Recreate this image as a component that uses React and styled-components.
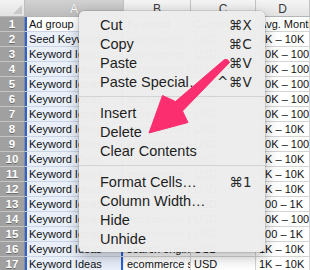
import React from "react";
import styled, { createGlobalStyle } from "styled-components";

const Global = createGlobalStyle`
  html, body { margin: 0; padding: 0; background: #fff; }
  #root { width: 310px; height: 270px; overflow: hidden; }
`;

const Stage = styled.div`
  position: relative;
  width: 310px;
  height: 270px;
  overflow: hidden;
  font-family: "Liberation Sans", Arial, sans-serif;
`;

const Sheet = styled.div`
  display: grid;
  grid-template-columns: 25px 99px 67px 65px 1fr;
  grid-template-rows: 17px repeat(17, 15px);
`;

const Corner = styled.div`
  position: relative;
  box-sizing: border-box;
  background: linear-gradient(#f3f3f3, #e2e2e2);
  border-right: 1px solid #bdbdbd;
  border-bottom: 1px solid #b5b5b5;
  &::after {
    content: "";
    position: absolute;
    right: 2px;
    bottom: 2px;
    border-style: solid;
    border-width: 0 0 9px 9px;
    border-color: transparent transparent #c9c9c9 transparent;
  }
`;

const ColHead = styled.div`
  box-sizing: border-box;
  display: flex;
  align-items: center;
  justify-content: center;
  font-size: 12px;
  color: ${(p) => (p.$active ? "#fdfdfd" : "#3a3a3a")};
  background: ${(p) =>
    p.$active ? "linear-gradient(#d2d2d2, #bcbcbc)" : "linear-gradient(#f4f4f4, #e3e3e3)"};
  text-shadow: ${(p) => (p.$active ? "0 0 1px #8a8a8a" : "none")};
  border-right: 1px solid #c2c2c2;
  border-bottom: 1px solid #b5b5b5;
  padding-top: 1px;
`;

const RowHead = styled.div`
  box-sizing: border-box;
  display: flex;
  align-items: center;
  justify-content: center;
  font-size: 11.5px;
  font-weight: bold;
  color: #fff;
  background: #a0a0a0;
  text-shadow: 0 1px 0 rgba(0, 0, 0, 0.35);
  border-bottom: 1px solid #c4c4c4;
  border-right: 1px solid #8a8a8a;
`;

const Cell = styled.div`
  box-sizing: border-box;
  display: flex;
  align-items: center;
  padding-left: ${(p) => (p.$sel ? "4px" : "3px")};
  font-size: 11px;
  color: #111;
  white-space: nowrap;
  overflow: hidden;
  background: ${(p) => (p.$sel ? (p.$activeCell ? "#ffffff" : "#e9f0fb") : "#ffffff")};
  border-right: 1px solid ${(p) => (p.$sel ? "transparent" : "#d4d4d4")};
  border-bottom: 1px solid ${(p) => (p.$sel ? "#cbd5e6" : "#d4d4d4")};
  box-shadow: ${(p) => (p.$sel ? "inset 2px 0 #2d62d8, inset -2px 0 #2d62d8" : "none")};
`;

const Menu = styled.div`
  position: absolute;
  left: 79px;
  top: 11px;
  width: 186px;
  box-sizing: border-box;
  padding: 4px 0 4px;
  background: rgba(237, 237, 237, 0.98);
  border-radius: 5px;
  box-shadow: 0 0 0 0.5px rgba(0, 0, 0, 0.18), 0 5px 14px rgba(0, 0, 0, 0.28);
  font-family: "Liberation Sans", "DejaVu Sans", Arial, sans-serif;
`;

const Item = styled.div`
  display: flex;
  align-items: center;
  justify-content: space-between;
  height: 19px;
  padding: 0 13px 0 21px;
  font-size: 14.5px;
  color: #1e1e1e;
`;

const Shortcut = styled.span`
  font-family: "DejaVu Sans", sans-serif;
  font-size: 13.5px;
  color: #2a2a2a;
  letter-spacing: 0.3px;
`;

const Separator = styled.div`
  height: 1px;
  background: #d3d3d3;
  margin: 5px 0 6px;
`;

const Arrow = styled.svg`
  position: absolute;
  left: 0;
  top: 0;
  width: 310px;
  height: 270px;
  pointer-events: none;
`;

const colA = [
  "Ad group",
  "Seed Keywords",
  ...Array(15).fill("Keyword Ideas"),
];
const colB = [
  "Keyword",
  "ecommerce",
  "ecommerce software",
  "ecommerce platform",
  "ecommerce website",
  "ecommerce sites",
  "ecommerce solutions",
  "ecommerce hosting",
  "ecommerce store",
  "ecommerce shop",
  "ecommerce web",
  "ecommerce builder",
  "ecommerce design",
  "ecommerce tools",
  "ecommerce business",
  "search engine optimization",
  "ecommerce software",
];
const colC = ["Currency", ...Array(16).fill("USD")];
const colD = [
  "Avg. Monthly Searches",
  "1K – 10K",
  "10K – 100K",
  "10K – 100K",
  "10K – 100K",
  "10K – 100K",
  "10K – 100K",
  "1K – 10K",
  "10K – 100K",
  "1K – 10K",
  "1K – 10K",
  "1K – 10K",
  "100 – 1K",
  "10K – 100K",
  "100 – 1K",
  "1K – 10K",
  "1K – 10K",
];

const menuGroups = [
  [
    ["Cut", "⌘X"],
    ["Copy", "⌘C"],
    ["Paste", "⌘V"],
    ["Paste Special…", "^⌘V"],
  ],
  [["Insert"], ["Delete"], ["Clear Contents"]],
  [["Format Cells…", "⌘1"], ["Column Width…"], ["Hide"], ["Unhide"]],
];

export default function App() {
  return (
    <Stage>
      <Global />
      <Sheet>
        <Corner />
        <ColHead $active>A</ColHead>
        <ColHead>B</ColHead>
        <ColHead>C</ColHead>
        <ColHead>D</ColHead>
        {colA.map((a, i) => (
          <React.Fragment key={i}>
            <RowHead>{i + 1}</RowHead>
            <Cell $sel $activeCell={i === 0}>
              {a}
            </Cell>
            <Cell>{colB[i]}</Cell>
            <Cell>{colC[i]}</Cell>
            <Cell>{colD[i]}</Cell>
          </React.Fragment>
        ))}
      </Sheet>
      <Menu>
        {menuGroups.map((g, gi) => (
          <React.Fragment key={gi}>
            {gi > 0 && <Separator />}
            {g.map(([label, sc]) => (
              <Item key={label}>
                <span>{label}</span>
                {sc && <Shortcut>{sc}</Shortcut>}
              </Item>
            ))}
          </React.Fragment>
        ))}
      </Menu>
      <Arrow viewBox="0 0 310 270">
        <path
          d="M224.5 59.5 Q228 58.5 229.5 62.5 L182.5 111 L188 122.5 L149 133 L162.5 95.5 L175.5 101.5 Z"
          fill="#fb2e6f"
          stroke="#fb2e6f"
          strokeWidth="1"
          strokeLinejoin="round"
        />
      </Arrow>
    </Stage>
  );
}
